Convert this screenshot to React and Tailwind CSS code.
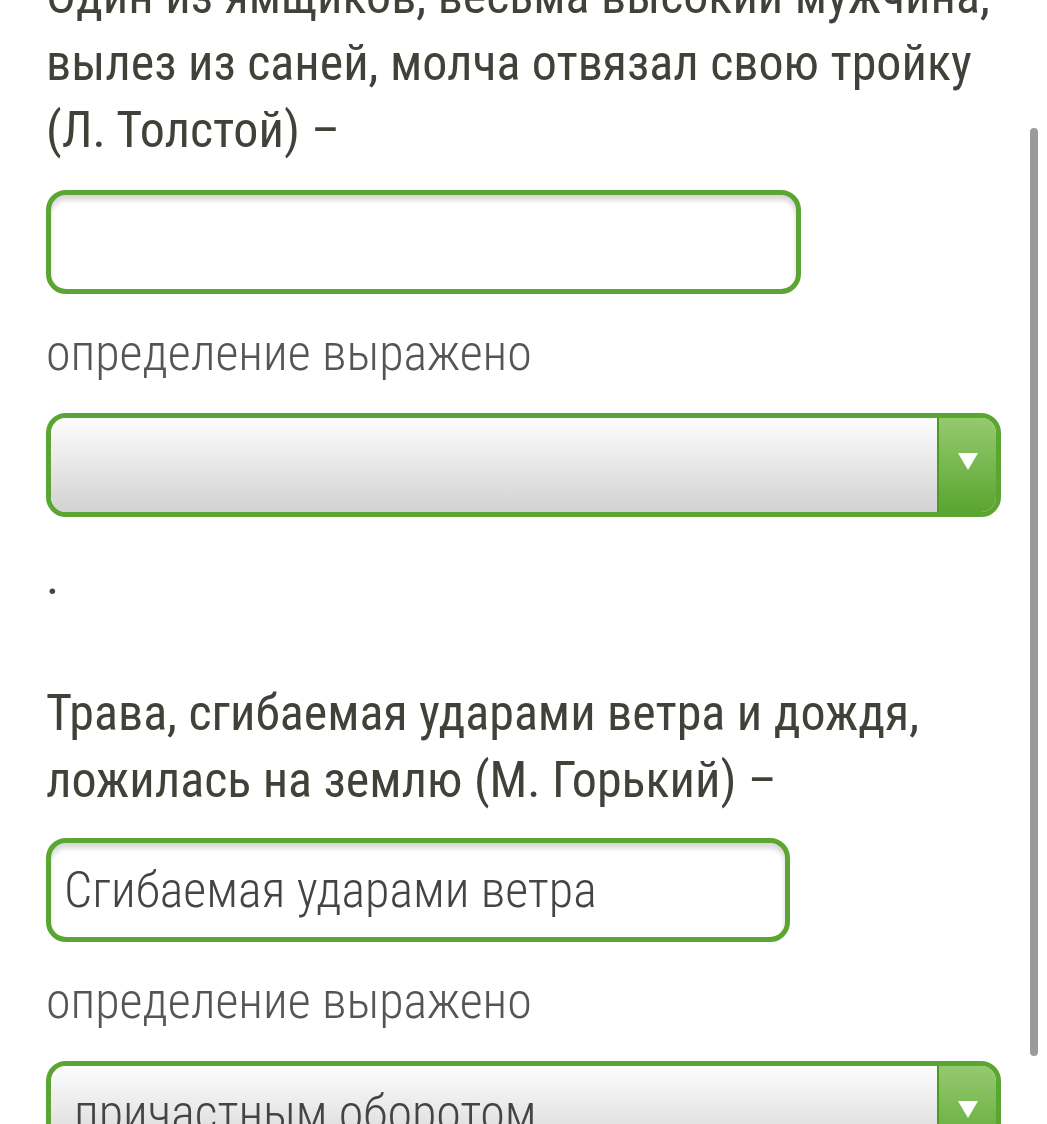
import React from "react";

const font = { fontFamily: '"Roboto Condensed", Roboto, "Noto Sans", sans-serif' };

function TextInput({ value, width }) {
  return (
    <div
      className={`h-[104px] rounded-[20px] border-[5px] border-[#5ba632] bg-white shadow-[inset_0_5px_5px_rgba(0,0,0,0.16)] flex items-center pl-[13px] text-[50px] font-light text-[#444] ${width}`}
    >
      {value}
    </div>
  );
}

function Select({ value }) {
  return (
    <div className="h-[104px] w-[955px] rounded-[20px] border-[5px] border-[#5ba632] flex overflow-hidden">
      <div className="flex-1 bg-gradient-to-b from-[#fdfdfd] to-[#d2d2d2] flex items-center pl-[23px] text-[50px] font-light text-[#444] rounded-l-[14px] overflow-hidden">
        {value}
      </div>
      <div className="w-[59px] border-l-[2px] border-[#4f9a26] bg-gradient-to-b from-[#95ca6e] to-[#5aa52e] flex items-start justify-center pt-[34px]">
        <svg width="22" height="19" viewBox="0 0 22 19">
          <polygon points="1,1 21,1 11,18" fill="#fff" />
        </svg>
      </div>
    </div>
  );
}

export default function App() {
  return (
    <div className="relative w-[1047px] h-[1124px] overflow-hidden bg-white" style={font}>
      <div className="pl-[46px] w-[1010px] mt-[-37px] flex flex-col">
        <p className="text-[50px] leading-[67px] text-[#41413a]">
          Один из ямщиков, весьма высокий мужчина, вылез из саней, молча отвязал свою тройку (Л. Толстой) –
        </p>
        <div className="mt-[26px]">
          <TextInput value="" width="w-[755px]" />
        </div>
        <p className="mt-[26px] text-[50px] leading-[67px] font-light text-[#555]">определение выражено</p>
        <div className="mt-[26px]">
          <Select value="" />
        </div>
        <p className="mt-[27px] text-[50px] leading-[67px] text-[#444]">.</p>
        <p className="mt-[69px] text-[50px] leading-[67px] text-[#41413a]">
          Трава, сгибаемая ударами ветра и дождя, ложилась на землю (М. Горький) –
        </p>
        <div className="mt-[24px]">
          <TextInput value="Сгибаемая ударами ветра" width="w-[744px]" />
        </div>
        <p className="mt-[26px] text-[50px] leading-[67px] font-light text-[#555]">определение выражено</p>
        <div className="mt-[26px]">
          <Select value="причастным оборотом" />
        </div>
      </div>
      <div className="absolute left-[1030px] top-[128px] w-[8px] h-[928px] rounded-full bg-[#9a9a9a]" />
    </div>
  );
}
